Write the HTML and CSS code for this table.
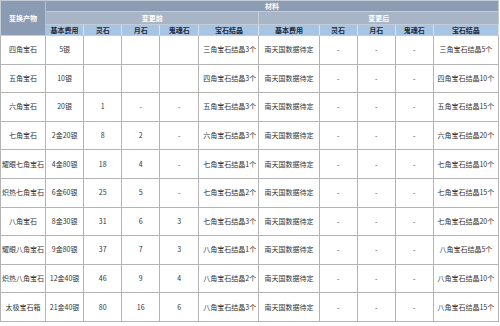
FILE: index.html
```html
<!DOCTYPE html>
<html lang="zh">
<head>
<meta charset="utf-8">
<title>宝石变换材料</title>
<link rel="stylesheet" href="styles.css">
</head>
<body>
<table class="gems">
  <colgroup>
    <col class="c-prod"><col class="c-s"><col class="c-s"><col class="c-s"><col class="c-s2"><col class="c-cry">
    <col class="c-cry"><col class="c-s"><col class="c-s"><col class="c-s"><col class="c-cry2">
  </colgroup>
  <thead>
    <tr class="h1">
      <th rowspan="3" class="prod">变换产物</th>
      <th colspan="10">材料</th>
    </tr>
    <tr class="h2">
      <th colspan="5">变更前</th>
      <th colspan="5">变更后</th>
    </tr>
    <tr class="h3">
      <th>基本费用</th><th>灵石</th><th>月石</th><th>鬼魂石</th><th>宝石结晶</th>
      <th>基本费用</th><th>灵石</th><th>月石</th><th>鬼魂石</th><th>宝石结晶</th>
    </tr>
  </thead>
  <tbody>
    <tr><td>四角宝石</td><td>5银</td><td></td><td></td><td></td><td class="cry">三角宝石结晶3个</td><td>南天国数据待定</td><td>-</td><td>-</td><td>-</td><td>三角宝石结晶5个</td></tr>
    <tr><td>五角宝石</td><td>10银</td><td></td><td></td><td></td><td class="cry">四角宝石结晶3个</td><td>南天国数据待定</td><td>-</td><td>-</td><td>-</td><td>四角宝石结晶10个</td></tr>
    <tr><td>六角宝石</td><td>20银</td><td>1</td><td>-</td><td>-</td><td class="cry">五角宝石结晶3个</td><td>南天国数据待定</td><td>-</td><td>-</td><td>-</td><td>五角宝石结晶15个</td></tr>
    <tr><td>七角宝石</td><td>2金20银</td><td>8</td><td>2</td><td>-</td><td class="cry">六角宝石结晶3个</td><td>南天国数据待定</td><td>-</td><td>-</td><td>-</td><td>六角宝石结晶20个</td></tr>
    <tr><td>耀眼七角宝石</td><td>4金80银</td><td>18</td><td>4</td><td>-</td><td class="cry">七角宝石结晶1个</td><td>南天国数据待定</td><td>-</td><td>-</td><td>-</td><td>七角宝石结晶10个</td></tr>
    <tr><td>炽热七角宝石</td><td>6金60银</td><td>25</td><td>5</td><td>-</td><td class="cry">七角宝石结晶2个</td><td>南天国数据待定</td><td>-</td><td>-</td><td>-</td><td>七角宝石结晶15个</td></tr>
    <tr><td>八角宝石</td><td>8金30银</td><td>31</td><td>6</td><td>3</td><td class="cry">七角宝石结晶3个</td><td>南天国数据待定</td><td>-</td><td>-</td><td>-</td><td>七角宝石结晶20个</td></tr>
    <tr><td>耀眼八角宝石</td><td>9金80银</td><td>37</td><td>7</td><td>3</td><td class="cry">八角宝石结晶1个</td><td>南天国数据待定</td><td>-</td><td>-</td><td>-</td><td>八角宝石结晶5个</td></tr>
    <tr><td>炽热八角宝石</td><td>12金40银</td><td>46</td><td>9</td><td>4</td><td class="cry">八角宝石结晶2个</td><td>南天国数据待定</td><td>-</td><td>-</td><td>-</td><td>八角宝石结晶10个</td></tr>
    <tr><td>太极宝石箱</td><td>21金40银</td><td>80</td><td>16</td><td>6</td><td class="cry">八角宝石结晶3个</td><td>南天国数据待定</td><td>-</td><td>-</td><td>-</td><td>八角宝石结晶15个</td></tr>
  </tbody>
</table>
</body>
</html>
```

FILE: styles.css
```css
html, body {
  margin: 0;
  padding: 0;
  background: #ffffff;
}

.gems {
  border-collapse: collapse;
  table-layout: fixed;
  width: 499px;
  font-family: "Noto Sans CJK SC", "Noto Sans", sans-serif;
  font-size: 7px;
  color: #333333;
  border: 1px solid #a8a8a8;
}

.c-prod { width: 45px; }
.c-s { width: 38px; }
.c-s2 { width: 39px; }
.c-cry { width: 60px; }
.c-cry2 { width: 65px; }

.gems th {
  font-weight: bold;
  padding: 0;
  text-align: center;
  line-height: 9px;
  border: 1px solid #c4ccd8;
}

.h1 th {
  background: #8c9cb3;
  color: #ffffff;
  height: 10px;
}

.h1 th.prod {
  background: #8a9bb3;
  color: #ffffff;
  border-right: 1px solid #b5c0cf;
}

.h2 th {
  background: #a8b5c6;
  color: #ffffff;
  height: 12px;
}

.h3 th {
  background: #a8c4e3;
  color: #1f2a3a;
  height: 10px;
  border-left: 1px solid #d8e4f2;
  border-right: 1px solid #d8e4f2;
}

.gems td {
  height: 27.6px;
  padding: 0 1px;
  text-align: center;
  white-space: nowrap;
  overflow: hidden;
  border: 1px solid #b4b4b4;
  line-height: 9px;
}

.gems td.cry {
  text-align: left;
  padding-left: 4px;
  padding-right: 0;
}
```
